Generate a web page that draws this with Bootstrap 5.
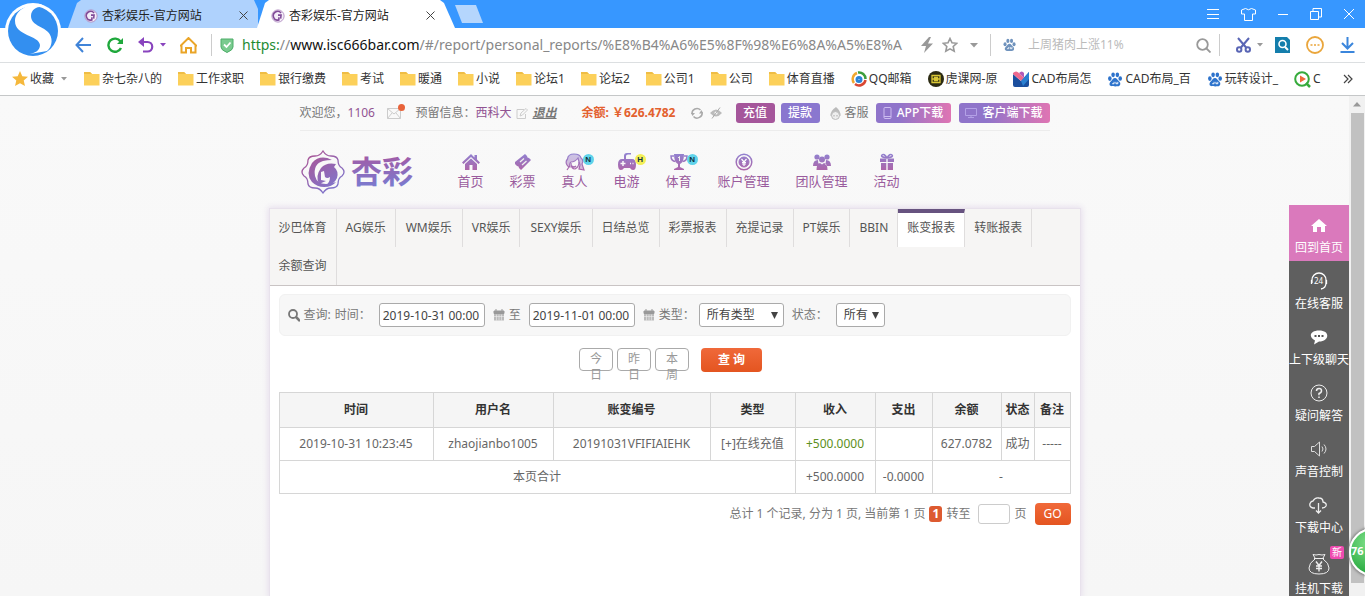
<!DOCTYPE html>
<html lang="zh-CN">
<head>
<meta charset="utf-8">
<meta name="viewport" content="width=device-width, initial-scale=1">
<title>杏彩娱乐-官方网站</title>
<link href="https://cdn.jsdelivr.net/npm/bootstrap@5.3.0/dist/css/bootstrap.min.css" rel="stylesheet">
<style>
body{font-family:"Noto Sans","Noto Sans CJK SC",sans-serif;font-size:12px;line-height:16px;color:#666;background:#fff;height:100vh;overflow:hidden}
a{color:inherit;text-decoration:none}
button,input,select{font-family:inherit;font-size:12px}
svg{display:block;flex:none}
/* browser frame */
.titlebar{background:#3797ff;height:28px;padding-left:68px}
.app-logo{left:0;top:0;z-index:5}
.win-tab{height:28px;width:190px;padding:3px 10px 0 16px;color:#222;background:#afd2fd;clip-path:polygon(0 100%,9px 3px,13px 0,186px 0,100% 9px,100% 100%)}
.win-tab.current{width:198px;margin-left:-1px;padding:3px 20px 0 14px;background:#fff;clip-path:polygon(0 100%,8px 3px,12px 0,183px 0,187px 3px,100% 100%)}
.plain{border:0;background:none;padding:0;color:inherit;line-height:16px}
.new-tab{width:30px;height:18px;margin-top:5px;background:#b5d6fd;clip-path:polygon(0 0,21px 0,28px 100%,7px 100%)}
.win-ctl{padding-right:10px;gap:21px}
.addr{height:35px;padding:0 10px 0 75px;border-bottom:1px solid #dcdfe1}
.tools{gap:14px}
.sp{margin-left:12px}
.caret-gap{gap:6px}
.url{font-size:14px;line-height:24px;color:#888;white-space:nowrap;overflow:hidden;min-width:0}
.url b{font-weight:400;color:#111}
.url i{font-style:normal;color:#1d8b33}
.vline{width:1px;height:22px;background:#ccc}
.finder{width:152px;border:0;padding:0;color:#999;outline:0}
.finder::placeholder{color:#bbb;opacity:1}
.bookmarks{height:33px;padding:0 12px;gap:16px;border-bottom:1px solid #c5c7c8;color:#333;white-space:nowrap}
.bookmarks a{display:flex;align-items:center;gap:2px}
/* site */
.viewport{background:#f8f8f8 linear-gradient(#f9f9f9,#f6f6f6);min-height:0}
.scrollbar{width:16px;background:#f1f1f1}
.scroll-thumb{width:13px;height:470px;background:#c1c1c1}
.site{width:810px}
.inner{margin:0 30px}
.topbar{height:35px;border-bottom:1px solid #ececec;display:grid;grid-template-columns:87px 29px 100px 17px 49px 109px 19px 26px 45px 49px 46px 83px 91px;align-items:center;white-space:nowrap;color:#777}
.plum{color:#915392}
.orange{color:#e3612f}
.pill{border:0;border-radius:3px;color:#fff;height:20px;line-height:18px;padding:0;text-align:center;font-weight:500}
.pill-in{width:39px;background:#a5569b}
.pill-out{width:39px;background:#8a77cf}
.pill-dl{background:linear-gradient(90deg,#8f74ca 30%,#df75b3);display:flex;align-items:center;justify-content:center;gap:5px}
.mail-dot{width:7px;height:7px;background:#e8633a;border-radius:50%;right:-4px;top:-4px}
.mainnav{height:78px;padding-top:3px}
.brand{margin-right:29px}
.mainnav .entry{font-size:13px;line-height:18px;padding:0 13px;color:#9a5b9d;white-space:nowrap;display:flex;flex-direction:column;align-items:center;gap:1px;position:relative}
.entry svg{opacity:.88}
.corner{position:absolute;top:1px;left:50%;margin-left:8px;width:11px;height:11px;border-radius:50%;background:#5fd3ea;color:#134;font:700 8px/11px "Liberation Sans",sans-serif;text-align:center}
.corner.hot{background:#f3ef58}
.panel{background:#fff;box-shadow:0 0 0 1px #e8e2ec,0 0 6px 2px #e6deec}
.subnav{background:#f6f5f4;border-bottom:1px solid #c9c4c4}
.subnav a{display:block;height:38px;line-height:37px;padding:0 9px;border-right:1px solid #dfdddd;white-space:nowrap;color:#555}
.subnav a.wide{padding:0 10px}
.subnav a.current{background:#fff;border-top:4px solid #675380;line-height:29px}
.body-pad{padding:8px 9px}
.filters{height:42px;background:#f7f7f7;border:1px solid #f1f1f1;border-radius:6px;padding:0 8px;white-space:nowrap;color:#777}
.ctl{height:24px;border:1px solid #aaa;border-radius:3px;background:#fff;color:#444;padding:0 3px}
.date-in{width:106px}
.kind-in{width:85px}
.state-in{width:49px}
select.ctl{appearance:none;padding:0 7px;background:#fff url("data:image/svg+xml,%3Csvg xmlns='http://www.w3.org/2000/svg' width='7' height='7'%3E%3Cpath d='M0 0h7L3.5 7z' fill='%23444'/%3E%3C/svg%3E") no-repeat right 5px center}
.day{width:34px;height:23px;padding:2px 10px 0;border:1px solid #aaa;border-radius:4px;background:#fff;color:#999;line-height:16px;display:block}
.go{border:0;color:#fff;border-radius:4px;background:linear-gradient(#f0693a,#e45520)}
.query{width:61px;height:24px;font-weight:700}
.goto{width:36px;height:22px}
.records{table-layout:fixed;border-collapse:collapse;text-align:center;color:#666;margin:20px 0 9px}
.records th,.records td{border:1px solid #d6d6d6;padding:0;height:33px;white-space:nowrap}
.records th{height:35px;background:#f5f5f5;color:#333;text-align:center}
.records .gain{color:#5d8f22}
.c1{width:154px}.c2{width:120px}.c3{width:157px}.c4{width:85px}.c5{width:80px}.c6{width:57px}.c7{width:69px}.c8{width:33px}.c9{width:36px}
.pager{color:#777;white-space:nowrap}
.pageno{background:#dd5a30;color:#fff;font-weight:700;border-radius:3px;width:13px;text-align:center}
.page-in{width:32px;height:20px;border:1px solid #ccc;border-radius:3px}
/* floating side menu */
.side{width:60px;right:0;top:109px;background:#5f5f5f;color:#fff}
.side a{height:56px;display:flex;flex-direction:column;align-items:center;gap:6px;padding-top:11px;white-space:nowrap}
.side a.current{background:#da79bc}
.side a.tall{height:64px;padding-top:12px}
.fresh{right:5px;top:5px;background:#f04bb0;border-radius:2px;font-size:10px;line-height:13px;padding:0 2px}
.speed-wrap{width:24px}
.speed{right:-32px;top:432px;width:48px;height:48px;border-radius:50%;border:2px solid #fff;background:radial-gradient(circle at 40% 30%,#7fe08a,#2fae45 70%);box-shadow:0 0 3px 1px #7a7a7a;color:#fff;font-size:11px;font-weight:700;line-height:42px;z-index:4}
</style>
</head>
<body class="d-flex flex-column">
<svg width="0" height="0" class="position-absolute" aria-hidden="true">
  <defs>
    <linearGradient id="pg" gradientUnits="userSpaceOnUse" x1="0" y1="0" x2="0" y2="18"><stop offset="0" stop-color="#8273cd"/><stop offset="1" stop-color="#a5509c"/></linearGradient>
    <linearGradient id="lg" gradientUnits="userSpaceOnUse" x1="5" y1="0" x2="35" y2="44"><stop offset="0" stop-color="#b0528f"/><stop offset="1" stop-color="#7c78d0"/></linearGradient>
    <linearGradient id="tg" gradientUnits="userSpaceOnUse" x1="0" y1="6" x2="0" y2="38"><stop offset="0" stop-color="#a25ba6"/><stop offset="1" stop-color="#7a7bd0"/></linearGradient>
    <symbol id="folder" viewBox="0 0 16 14"><path d="M0 0h6l2 2h7.500v11.500H0z" fill="#fcd05a"/><path d="M0 0h6l2 2H0z" fill="#efbd45"/></symbol>
    <symbol id="fav" viewBox="0 0 16 16"><circle cx="8" cy="8" r="7" fill="#f4edf8" stroke="#b08bc0"/><path d="M11.500 4.500A5 5 0 1 0 9 12.500V9.500M8 7h3.500l-.5 4" fill="none" stroke="#804b98" stroke-width="1.800"/></symbol>
    <symbol id="paw" viewBox="0 0 16 16"><ellipse cx="2.500" cy="7" rx="1.900" ry="2.500"/><ellipse cx="6" cy="3" rx="1.900" ry="2.600"/><ellipse cx="10.500" cy="3" rx="1.900" ry="2.600"/><ellipse cx="13.600" cy="7" rx="1.900" ry="2.400"/><path d="M8 6.500c2 0 2.500 2 4.500 3.600S14 15 11 15.300 5 15.300 4 15c-2.500-.7-2.300-3.500-.5-5S6 6.500 8 6.500z"/><path d="M5 12.500h2v-2M9 10.500v2h2v-2" fill="none" stroke="#fff"/></symbol>
    <symbol id="cal" viewBox="0 0 12 12"><path d="M1 2h10v9.500H1z" fill="#bbb"/><path d="M1 2h10v2.500H1zM3 0v3M9 0v3" fill="#999" stroke="#999"/><path d="M1 7.500h10M3.500 5.500v6M6 5.500v6M8.500 5.500v6" stroke="#eee" stroke-width=".6"/></symbol>
  </defs>
</svg>

<header class="position-relative">
  <svg class="app-logo position-absolute" width="64" height="58" viewBox="0 0 64 58" aria-label="搜狗浏览器"><circle cx="33" cy="31" r="28" fill="#fff"/><circle cx="33" cy="31" r="25" fill="#338ff0"/><path d="M41 4C30 3 15 9 15 21c0 15 24 14 25 24 0 6-6 8-10 9l17-3c6-5 6-14 1-19-6-6-17-7-17-16 0-7 7-10 13-9z" fill="#fff"/></svg>
  <div class="titlebar d-flex">
    <div class="win-tab d-flex align-items-center"><svg width="14" height="14"><use href="#fav"/></svg><span class="ms-1 flex-grow-1">杏彩娱乐-官方网站</span><button class="plain" aria-label="关闭标签"><svg width="9" height="9"><path d="M.5.5l8 8M8.500.5l-8 8" stroke="#444"/></svg></button></div>
    <div class="win-tab current d-flex align-items-center"><svg width="14" height="14"><use href="#fav"/></svg><span class="ms-1 flex-grow-1">杏彩娱乐-官方网站</span><button class="plain" aria-label="关闭标签"><svg width="9" height="9"><path d="M.5.5l8 8M8.500.5l-8 8" stroke="#444"/></svg></button></div>
    <button class="plain new-tab" aria-label="新标签"></button>
    <div class="win-ctl d-flex align-items-center ms-auto">
      <button class="plain" aria-label="菜单"><svg width="14" height="12" stroke="#fff"><path d="M1 1.500h12M1 6.500h12M1 10.500h12"/></svg></button>
      <button class="plain" aria-label="皮肤"><svg width="15" height="13" fill="none" stroke="#fff"><path d="M4.500.5Q7.500 3 10.500.5L14.500 2v4h-3v6.500h-8V6h-3V2z"/></svg></button>
      <button class="plain" aria-label="最小化"><svg width="12" height="12" stroke="#fff"><path d="M1 6.500h10"/></svg></button>
      <button class="plain" aria-label="还原"><svg width="12" height="12" fill="none" stroke="#fff"><path d="M.5 3.500h8v8h-8zM3 3V.5h8.500V9H9"/></svg></button>
      <button class="plain" aria-label="关闭"><svg width="12" height="12" stroke="#fff"><path d="M1 1l10 10M11 1L1 11"/></svg></button>
    </div>
  </div>
  <div class="addr d-flex align-items-center">
    <div class="tools d-flex align-items-center">
      <button class="plain" aria-label="后退"><svg width="17" height="16" fill="none" stroke="#4084d8" stroke-width="2"><path d="M16 8H2M8 1L1.500 8 8 15"/></svg></button>
      <button class="plain" aria-label="刷新"><svg width="18" height="16" fill="none" stroke="#1fa83c" stroke-width="2.400"><path d="M14.500 4.500A6.600 6.600 0 1 0 15 11"/><path d="M17 1v6h-6z" fill="#1fa83c" stroke="none"/></svg></button>
      <button class="plain d-flex align-items-center caret-gap" aria-label="撤销"><svg width="16" height="16" fill="none" stroke="#8944be" stroke-width="2.200"><path d="M2 5h7.500a4.500 4.500 0 0 1 0 9.500H5"/><path d="M6 0v10L0 5z" fill="#8944be" stroke="none"/></svg><svg width="6" height="4"><path d="M0 0h6L3 3.500z" fill="#8944be"/></svg></button>
      <button class="plain" aria-label="主页"><svg width="17" height="17" fill="none" stroke="#eaa528" stroke-width="2"><path d="M1.500 15.500V8.500H.8L8.500 1l7.700 7.500h-.7v7H11v-4.500H6v4.500z"/></svg></button>
      <span class="vline"></span>
    </div>
    <svg class="ms-2" width="14" height="16"><path d="M1 2h12v8q0 3-6 5.500Q1 13 1 10z" fill="#7acb8f" stroke="#4cad68"/><path d="M4 7.500L6.500 10 10.500 5.500" stroke="#fff" stroke-width="1.800" fill="none"/></svg>
    <div class="url flex-grow-1 ms-2" role="textbox" aria-label="网址"><i>https:</i>//<b>www.isc666bar.com</b>/#/report/personal_reports/%E8%B4%A6%E5%8F%98%E6%8A%A5%E8%A</div>
    <svg class="ms-1" width="14" height="16"><path d="M9 0L1 9h5l-2 7 9-9.500H8L11 0z" fill="#999"/></svg>
    <button class="plain ms-2" aria-label="收藏"><svg width="16" height="16" fill="none" stroke="#999" stroke-width="1.600"><path d="M8 1.500l2 4.300 4.700.5-3.500 3.200 1 4.700L8 11.900l-4.200 2.300 1-4.700L1.300 6.300 6 5.800z"/></svg></button>
    <svg class="sp" width="8" height="5"><path d="M0 0h8L4 4.500z" fill="#999"/></svg>
    <span class="vline sp"></span>
    <svg class="sp" width="13" height="14" fill="#7093bd"><use href="#paw"/></svg>
    <input class="finder sp" type="search" placeholder="上周猪肉上涨11%" aria-label="搜索">
    <button class="plain ms-3" aria-label="搜索"><svg width="15" height="15" fill="none" stroke="#999" stroke-width="1.800"><circle cx="6.500" cy="6.500" r="5.300"/><path d="M10.500 10.500l4 4"/></svg></button>
    <span class="vline ms-2"></span>
    <button class="plain ms-3 d-flex align-items-center caret-gap" aria-label="截图"><svg width="15" height="16" fill="none" stroke="#5965b5" stroke-width="2"><path d="M2 1l8.500 10M13 1L4.500 11"/><circle cx="3.200" cy="12.500" r="2.200"/><circle cx="11.800" cy="12.500" r="2.200"/></svg><svg width="6" height="4"><path d="M0 0h6L3 3.500z" fill="#999"/></svg></button>
    <svg class="sp" width="15" height="16"><path d="M0 0h12l3 3v13H0z" fill="#147eac"/><circle cx="7.500" cy="7" r="3.500" fill="none" stroke="#fff" stroke-width="1.600"/><path d="M10 10l3 3" stroke="#fff" stroke-width="2"/></svg>
    <svg class="ms-3" width="18" height="18"><circle cx="9" cy="9" r="8" fill="#fff" stroke="#eaa63c" stroke-width="1.800"/><path d="M4.500 9h2M8 9h2M11.500 9h2" stroke="#eaa63c" stroke-width="1.600"/></svg>
    <button class="plain ms-3" aria-label="下载"><svg width="15" height="16" fill="none" stroke="#3b86dc" stroke-width="2"><path d="M7.500 0v11M2 6l5.500 5.500L13 6M.5 15h14"/></svg></button>
  </div>
  <nav class="bookmarks d-flex align-items-center overflow-hidden">
    <a href="#"><svg width="16" height="16"><path d="M8 0l2.300 5.200 5.700.6-4.300 3.700 1.300 5.500L8 12.200 3 15l1.300-5.500L0 5.800l5.700-.6z" fill="#f5b83c"/></svg><span>收藏</span><svg class="ms-1" width="8" height="4"><path d="M1 0h6L4 3.500z" fill="#999"/></svg></a>
    <a href="#"><svg width="16" height="14"><use href="#folder"/></svg>杂七杂八的</a>
    <a href="#"><svg width="16" height="14"><use href="#folder"/></svg>工作求职</a>
    <a href="#"><svg width="16" height="14"><use href="#folder"/></svg>银行缴费</a>
    <a href="#"><svg width="16" height="14"><use href="#folder"/></svg>考试</a>
    <a href="#"><svg width="16" height="14"><use href="#folder"/></svg>暖通</a>
    <a href="#"><svg width="16" height="14"><use href="#folder"/></svg>小说</a>
    <a href="#"><svg width="16" height="14"><use href="#folder"/></svg>论坛1</a>
    <a href="#"><svg width="16" height="14"><use href="#folder"/></svg>论坛2</a>
    <a href="#"><svg width="16" height="14"><use href="#folder"/></svg>公司1</a>
    <a href="#"><svg width="16" height="14"><use href="#folder"/></svg>公司</a>
    <a href="#"><svg width="16" height="14"><use href="#folder"/></svg>体育直播</a>
    <a href="#"><svg width="16" height="16" fill="none" stroke-width="2.500"><path d="M3 12A6.500 6.500 0 0 1 6 2" stroke="#f2a72f"/><path d="M7 1.500A6.500 6.500 0 0 1 14.500 8" stroke="#3d9e3b"/><path d="M14.500 9A6.500 6.500 0 0 1 4 13" stroke="#d94632"/><circle cx="8" cy="8.500" r="2" stroke="#2a83d8" stroke-width="3"/></svg>QQ邮箱</a>
    <a href="#"><svg width="16" height="16"><circle cx="8" cy="8" r="8" fill="#2b2a12"/><path d="M4 4.500h8v7H4zM4 8h8M6.500 6.500h3v3h-3z" fill="none" stroke="#d9c736" stroke-width="1.300"/></svg>虎课网-原</a>
    <a href="#"><svg width="16" height="16"><path d="M0 3l8 7 8-9v13q0 2-2 2H2q-2 0-2-2z" fill="#1b4f9e"/><path d="M0 2q3-3 6 0l5 5-3 3-8-7z" fill="#ee6a8e"/><path d="M6 2q3-3 5 0v5z" fill="#b25ab8"/><path d="M8 10l8-9v7l-6 7z" fill="#2b80d1"/></svg>CAD布局怎</a>
    <a href="#"><svg width="16" height="15" fill="#2d73cc"><use href="#paw"/></svg>CAD布局_百</a>
    <a href="#"><svg width="16" height="15" fill="#2d73cc"><use href="#paw"/></svg>玩转设计_</a>
    <a href="#"><svg width="17" height="17"><circle cx="8" cy="8" r="6.800" fill="none" stroke="#36ab3c" stroke-width="2"/><path d="M12 12l4 4" stroke="#36ab3c" stroke-width="2.500"/><path d="M6 4.500v7L12 8z" fill="#ef6b3a"/></svg>C</a>
    <button class="plain ms-auto" aria-label="更多书签"><svg width="10" height="10" fill="none" stroke="#444" stroke-width="1.200"><path d="M1 1l4 4-4 4M5 1l4 4-4 4"/></svg></button>
  </nav>
</header>

<div class="viewport d-flex flex-grow-1 position-relative">
  <main class="flex-grow-1 d-flex justify-content-center position-relative overflow-hidden">
    <div class="site d-flex flex-column">
      <div class="inner topbar">
        <span>欢迎您，<a href="#" class="plum">1106</a></span>
        <a href="#" class="position-relative me-auto" aria-label="消息"><svg width="14" height="11" fill="none" stroke="#ccc"><path d="M.5.5h13v10H.5zM.5.5L7 6l6.500-5.500M.5 10.500L5 5M13.500 10.500L9 5"/></svg><span class="mail-dot position-absolute"></span></a>
        <span>预留信息：<span class="plum">西科大</span></span>
        <a href="#" aria-label="编辑"><svg width="12" height="11" fill="none" stroke="#ccc"><path d="M8 1.500H1v9h8.500V6M4 8l1-3L10 .5 11.500 2 6.500 7z"/></svg></a>
        <a href="#" class="fst-italic fw-bold text-decoration-underline">退出</a>
        <strong class="orange">余额: ￥626.4782</strong>
        <button class="plain" aria-label="刷新余额"><svg width="12" height="12" fill="none" stroke="#aaa" stroke-width="1.500"><path d="M1 7A5 5 0 0 1 9.500 3M11 5A5 5 0 0 1 2.500 9.500"/><path d="M0 6h4L1.500 9zM12 6.500H8L10.500 3z" fill="#aaa" stroke="none"/></svg></button>
        <button class="plain" aria-label="隐藏余额"><svg width="12" height="12"><path d="M0 6q6-7 12 0-6 7-12 0z" fill="#bbb"/><circle cx="6" cy="6" r="1.500" fill="#fff"/><path d="M2 11.500l8-11" stroke="#aaa"/></svg></button>
        <button class="pill pill-in">充值</button>
        <button class="pill pill-out">提款</button>
        <a href="#" class="d-flex align-items-center gap-1"><svg width="11" height="13"><path d="M6 0q5 4 4.500 9H.5Q0 4 6 0z" fill="#bbb"/><circle cx="5.500" cy="8.500" r="4" fill="#eee" stroke="#bbb"/><path d="M4 8v1.500M7 8v1.500" stroke="#aaa"/></svg>客服</a>
        <button class="pill pill-dl me-2"><svg width="9" height="12" fill="none" stroke="#cdbcf0"><rect x="1" y=".5" width="7" height="11" rx="1"/><path d="M1 9.500h7"/></svg>APP下载</button>
        <button class="pill pill-dl"><svg width="12" height="10" fill="none" stroke="#b3a1e6"><path d="M.5.5h11v7H.5zM6 7.500V9M3 9.500h6"/></svg>客户端下载</button>
      </div>
      <div class="inner mainnav d-flex align-items-center">
        <a href="#" class="brand" aria-label="杏彩"><svg width="116" height="46" viewBox="0 0 116 46">
          <path d="M23 2q3 5 8 5 6 0 7 4 0 6 4 8 4 4 0 8-4 2-4 8-1 4-7 4-5 0-8 5-3-5-8-5-6 0-7-4 0-6-4-8-4-4 0-8 4-2 4-8 1-4 7-4 5 0 8-5z" fill="none" stroke="url(#lg)" stroke-width="1.300"/>
          <path d="M32 11Q20 5 12 14q-7 11 0 19 5 5 12 5 8 0 12-5-5 2-10 2-9 0-11-8-2-12 8-15 4-1 9-1z" fill="url(#lg)"/><path d="M21 19q5-6 15-4l-2 3q5 4 3 11-3 7-12 8 5-3 5-9-3 2-5 0l-1-6-3 1v8l5 1-7 3q-4-8 2-16z" fill="url(#lg)"/>
          <text x="51" y="34" font-family="Noto Sans CJK SC" font-weight="700" font-size="31" fill="url(#tg)">杏彩</text></svg></a>
        <a href="#" class="entry"><svg width="20" height="18" fill="url(#pg)"><path d="M10 1L1 9.500l1.500 1.500L10 4l7.500 7L19 9.500 16 6.500V2h-2.500v2.500z"/><path d="M10 5.500L4 11v6h4.500v-5h3v5H16v-6z"/></svg>首页</a>
        <a href="#" class="entry"><svg width="20" height="18" fill="url(#pg)"><path d="M2 9L12 1l2 2q0 2 2 2l2 2L8 17l-2-2q0-2-2-2l-2-2z"/><path d="M7 9l4-3.500M9 12l4.500-4" stroke="#eee" stroke-width="1.300"/></svg>彩票</a>
        <a href="#" class="entry"><svg width="20" height="18" fill="url(#pg)" stroke="url(#pg)" stroke-width="1.200"><path d="M2 12Q0 9 2.500 6 3 1 9 1t7 4q3 2 1 6l2 6-5-1 1-4q-1-3-2-7-3 4-7 4-2 1-1 5-2 0-3-2z" fill-opacity=".45"/><path d="M6 10q0 6 4 6 4-2 4-7M4 14l-2 3M7 13q2 2 4 0" fill="none"/></svg>真人<span class="corner">N</span></a>
        <a href="#" class="entry"><svg width="20" height="18" fill="url(#pg)"><path d="M5 6h10q4 0 4 5.500T16 17q-2 0-3-2H7q-1 2-3 2-3 0-3-5.500T5 6zM9 6V3q0-1.500 2-1.500h3V0h-4Q7 0 7 3v3z"/><path d="M3.500 10.500h5M6 8v5M13 10.500h1M15.500 10.500h1" stroke="#f8f8f8" stroke-width="1.500"/></svg>电游<span class="corner hot">H</span></a>
        <a href="#" class="entry"><svg width="20" height="18" fill="url(#pg)"><path d="M5 1h10q0 8-4 10v3l4 2v1H5v-1l4-2v-3Q5 9 5 1z"/><path d="M5 3H2q0 5 4.500 5.500M15 3h3q0 5-4.500 5.500" fill="none" stroke="url(#pg)" stroke-width="1.500"/><path d="M9 5l1.500-1.500V8" fill="none" stroke="#eee"/></svg>体育<span class="corner">N</span></a>
        <a href="#" class="entry"><svg width="20" height="18" fill="none" stroke="url(#pg)"><circle cx="10" cy="9" r="7.800" stroke-width="1.500"/><circle cx="10" cy="9" r="5" fill="url(#pg)"/><path d="M7.500 6L10 9l2.500-3M10 9v4M8 9.500h4M8 11h4" stroke="#fff" stroke-width="1.200"/></svg>账户管理</a>
        <a href="#" class="entry"><svg width="20" height="18" fill="url(#pg)"><circle cx="5" cy="4" r="2.600"/><circle cx="15" cy="4" r="2.600"/><circle cx="10" cy="6.500" r="3"/><path d="M1 13q0-6 5-6 0 3 1 4l-2 2zM19 13q0-6-5-6 0 3-1 4l2 2zM4.500 17q0-6.500 3.500-7l2 1.500 2-1.500q3.500.5 3.500 7z"/></svg>团队管理</a>
        <a href="#" class="entry"><svg width="20" height="18" fill="url(#pg)"><path d="M3 5.500h6.300V9H3zM10.700 5.500H17V9h-6.300zM4 10h5.300v7H4zM10.700 10H16v7h-5.300z"/><path d="M10 5Q7 0 5 2t5 3Q13 0 15 2t-5 3" fill="none" stroke="url(#pg)" stroke-width="1.500"/></svg>活动</a>
      </div>
      <section class="panel flex-grow-1">
        <nav class="subnav d-flex flex-wrap">
          <a href="#">沙巴体育</a><a href="#">AG娱乐</a><a href="#" class="wide">WM娱乐</a><a href="#">VR娱乐</a><a href="#" class="wide">SEXY娱乐</a><a href="#">日结总览</a><a href="#">彩票报表</a><a href="#">充提记录</a><a href="#">PT娱乐</a><a href="#">BBIN</a><a href="#" class="current" aria-current="page">账变报表</a><a href="#">转账报表</a><a href="#">余额查询</a>
        </nav>
        <form class="body-pad">
          <div class="filters d-flex align-items-center">
            <svg width="12" height="13" fill="none" stroke="#777" stroke-width="1.800"><circle cx="5" cy="5" r="4"/><path d="M8 8l4 4" stroke-width="2.500"/></svg><span class="ms-1">查询:</span>
            <label for="from" class="ms-1">时间：</label><input id="from" class="ctl date-in ms-2" value="2019-10-31 00:00">
            <svg class="ms-2 me-1" width="12" height="12"><use href="#cal"/></svg><label for="to">至</label><input id="to" class="ctl date-in ms-2" value="2019-11-01 00:00">
            <svg class="ms-2 me-1" width="12" height="12"><use href="#cal"/></svg><label for="kind">类型：</label>
            <select id="kind" class="ctl kind-in ms-1"><option>所有类型</option></select>
            <label for="state" class="ms-2">状态：</label><select id="state" class="ctl state-in ms-2"><option>所有</option></select>
          </div>
          <div class="d-flex justify-content-center gap-1 mt-2 pt-1 pe-2">
            <button type="button" class="day">今日</button><button type="button" class="day">昨日</button><button type="button" class="day">本周</button><button type="button" class="go query ms-2">查 询</button>
          </div>
          <table class="records w-100">
            <colgroup><col class="c1"><col class="c2"><col class="c3"><col class="c4"><col class="c5"><col class="c6"><col class="c7"><col class="c8"><col class="c9"></colgroup>
            <thead><tr><th>时间</th><th>用户名</th><th>账变编号</th><th>类型</th><th>收入</th><th>支出</th><th>余额</th><th>状态</th><th>备注</th></tr></thead>
            <tbody>
              <tr><td>2019-10-31 10:23:45</td><td>zhaojianbo1005</td><td>20191031VFIFIAIEHK</td><td>[+]在线充值</td><td class="gain">+500.0000</td><td></td><td>627.0782</td><td>成功</td><td>-----</td></tr>
              <tr><td colspan="4">本页合计</td><td>+500.0000</td><td>-0.0000</td><td colspan="3">-</td></tr>
            </tbody>
          </table>
          <div class="pager d-flex align-items-center justify-content-end">
            <span>总计 1 个记录, 分为 1 页, 当前第 1 页</span><a href="#" class="pageno mx-1">1</a><label for="pg-in">转至</label><input id="pg-in" class="page-in ms-2 me-1"><span>页</span><button type="button" class="go goto ms-2">GO</button>
          </div>
        </form>
      </section>
    </div>
    <nav class="side position-absolute">
      <a href="#" class="current"><svg width="18" height="18"><path d="M9 3L1 10h2v6h4v-5h4v5h4v-6h2z" fill="#fff"/></svg>回到首页</a>
      <a href="#"><svg width="18" height="18" fill="none" stroke="#fff" stroke-width="1.300"><path d="M2 11V8a7 7 0 0 1 14 0v3q0 5-5 6M1.500 8v4M16.500 8v4"/><text x="4" y="12" font-size="8" fill="#fff" stroke="none">24</text></svg>在线客服</a>
      <a href="#"><svg width="18" height="18"><path d="M9 2.500c12 0 10 11 0 11l-5 3 1-4C-2 9 0 2.500 9 2.500z" fill="#fff"/><path d="M4.500 8h2M8 8h2M11.500 8h2" stroke="#555" stroke-width="2"/></svg>上下级聊天</a>
      <a href="#"><svg width="18" height="18" fill="none" stroke="#eee"><circle cx="9" cy="9" r="8"/><path d="M6.500 7q0-2.500 2.500-2.500t2.500 2.200T9 9.500v1.700M9 12.500v1.500" stroke-width="1.500"/></svg>疑问解答</a>
      <a href="#"><svg width="18" height="18" fill="none" stroke="#ddd"><path d="M1.500 6.500h3l5-4.500v14l-5-4.500h-3zM12 6.500q2 2.500 0 5M14 4.500q4 4.500 0 9"/></svg>声音控制</a>
      <a href="#"><svg width="20" height="18" fill="none" stroke="#eee" stroke-width="1.300"><path d="M6 12H4Q0 11 1 7.500 2 5 4 5q2-4 6-3 4 0 4 4 4 1 3 4-1 2-4 2M9.500 7v10M7 14.500L9.500 17 12 14.500"/></svg>下载中心</a>
      <a href="#" class="tall position-relative"><svg width="22" height="22" fill="none" stroke="#eee"><path d="M7 5L5 1.500q3 1 6 0 3 1 6 0L15 5M6 5.500h10M7 6q-6 4-6 9 0 6 10 6t10-6q0-5-6-9"/><path d="M8 8.500l3 4 3-4M11 12.500v6M8 13h6M8 15.500h6" stroke-width="1.400"/></svg>挂机下载<span class="fresh position-absolute">新</span></a>
    </nav>
  </main>
  <div class="scrollbar d-flex flex-column align-items-center"><svg width="16" height="17"><path d="M4 10.500h8L8 6z" fill="#999"/></svg><div class="scroll-thumb"></div></div>
  <div class="speed-wrap position-absolute top-0 bottom-0 end-0 overflow-hidden"><div class="speed position-absolute">76</div></div>
</div>
<script src="https://cdn.jsdelivr.net/npm/bootstrap@5.3.0/dist/js/bootstrap.bundle.min.js"></script>
</body>
</html>
